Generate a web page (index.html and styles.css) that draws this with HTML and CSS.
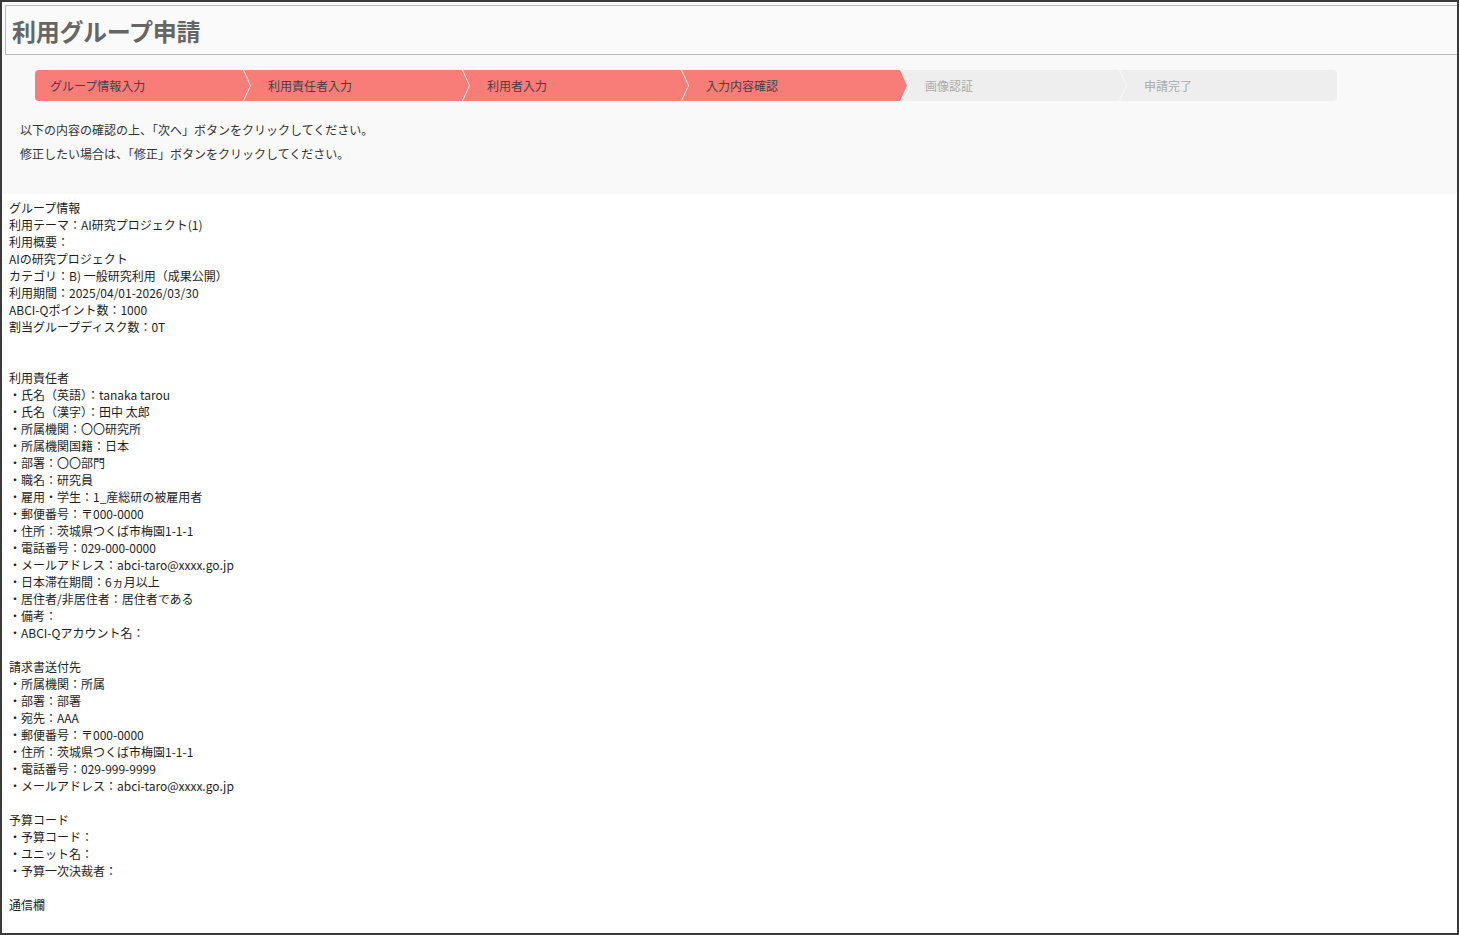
FILE: index.html
```html
<!DOCTYPE html>
<html lang="ja">
<head>
<meta charset="utf-8">
<title>利用グループ申請</title>
<link rel="stylesheet" href="styles.css">
</head>
<body>
<div class="frame">
  <div class="head">
    <div class="title-box"><h1 class="title">利用グループ申請</h1></div>
    <div class="stepper">
      <div class="step first active">グループ情報入力</div>
      <div class="step active">利用責任者入力</div>
      <div class="step active">利用者入力</div>
      <div class="step active">入力内容確認</div>
      <div class="step">画像認証</div>
      <div class="step last">申請完了</div>
    </div>
    <div class="notice">
      <p>以下の内容の確認の上、「次へ」ボタンをクリックしてください。</p>
      <p>修正したい場合は、「修正」ボタンをクリックしてください。</p>
    </div>
  </div>
  <div class="content">
    <div class="line">グループ情報</div>
    <div class="line">利用テーマ：AI研究プロジェクト(1)</div>
    <div class="line">利用概要：</div>
    <div class="line">AIの研究プロジェクト</div>
    <div class="line">カテゴリ：B) 一般研究利用（成果公開）</div>
    <div class="line">利用期間：2025/04/01-2026/03/30</div>
    <div class="line">ABCI-Qポイント数：1000</div>
    <div class="line">割当グループディスク数：0T</div>
    <div class="line blank"></div>
    <div class="line blank"></div>
    <div class="line">利用責任者</div>
    <div class="line">・氏名（英語）：tanaka tarou</div>
    <div class="line">・氏名（漢字）：田中 太郎</div>
    <div class="line">・所属機関：〇〇研究所</div>
    <div class="line">・所属機関国籍：日本</div>
    <div class="line">・部署：〇〇部門</div>
    <div class="line">・職名：研究員</div>
    <div class="line">・雇用・学生：1_産総研の被雇用者</div>
    <div class="line">・郵便番号：〒000-0000</div>
    <div class="line">・住所：茨城県つくば市梅園1-1-1</div>
    <div class="line">・電話番号：029-000-0000</div>
    <div class="line">・メールアドレス：abci-taro@xxxx.go.jp</div>
    <div class="line">・日本滞在期間：6ヵ月以上</div>
    <div class="line">・居住者/非居住者：居住者である</div>
    <div class="line">・備考：</div>
    <div class="line">・ABCI-Qアカウント名：</div>
    <div class="line blank"></div>
    <div class="line">請求書送付先</div>
    <div class="line">・所属機関：所属</div>
    <div class="line">・部署：部署</div>
    <div class="line">・宛先：AAA</div>
    <div class="line">・郵便番号：〒000-0000</div>
    <div class="line">・住所：茨城県つくば市梅園1-1-1</div>
    <div class="line">・電話番号：029-999-9999</div>
    <div class="line">・メールアドレス：abci-taro@xxxx.go.jp</div>
    <div class="line blank"></div>
    <div class="line">予算コード</div>
    <div class="line">・予算コード：</div>
    <div class="line">・ユニット名：</div>
    <div class="line">・予算一次決裁者：</div>
    <div class="line blank"></div>
    <div class="line">通信欄</div>
  </div>
</div>
</body>
</html>
```

FILE: styles.css
```css
html, body {
  margin: 0;
  padding: 0;
  background: #ffffff;
}

body {
  font-family: "Noto Sans CJK JP", "Noto Sans", sans-serif;
  color: #222222;
}

.frame {
  width: 1459px;
  height: 935px;
  box-sizing: border-box;
  border: 2px solid #3a3a3a;
  background: #ffffff;
  overflow: hidden;
}

.head {
  background: #f9f9f9;
  padding: 3px 0 28px 3px;
}

.title-box {
  height: 50px;
  box-sizing: border-box;
  border: 1px solid #b8b8b8;
  border-right: none;
  background: #fafafa;
  display: flex;
  align-items: center;
  padding: 2px 0 0 6px;
}

.title {
  margin: 0;
  font-size: 24px;
  font-weight: 700;
  color: #666666;
  letter-spacing: -0.3px;
  line-height: 1;
}

.stepper {
  display: flex;
  margin: 15px 0 0 30px;
}

.step {
  width: 225px;
  height: 31px;
  box-sizing: border-box;
  margin-left: -6px;
  padding-left: 24px;
  display: flex;
  align-items: center;
  font-size: 12px;
  color: #aaaaaa;
  background: #eeeeee;
  clip-path: polygon(0 0, calc(100% - 7px) 0, 100% 50%, calc(100% - 7px) 100%, 0 100%, 7px 50%);
}

.step.active {
  background: #f87c78;
  color: #444444;
}

.step.first {
  width: 215px;
  margin-left: 0;
  padding-left: 15px;
  border-radius: 4px 0 0 4px;
  clip-path: polygon(0 0, calc(100% - 7px) 0, 100% 50%, calc(100% - 7px) 100%, 0 100%);
}

.step.last {
  width: 217px;
  border-radius: 0 4px 4px 0;
  clip-path: polygon(0 0, 100% 0, 100% 100%, 0 100%, 7px 50%);
}

.notice {
  margin: 17px 0 0 15px;
  font-size: 12px;
  line-height: 24px;
  color: #333333;
}

.notice p {
  margin: 0;
}

.content {
  padding: 5px 0 0 7px;
  font-size: 12px;
  line-height: 17px;
  color: #1e1e1e;
}

.line {
  height: 17px;
  white-space: nowrap;
}
```
